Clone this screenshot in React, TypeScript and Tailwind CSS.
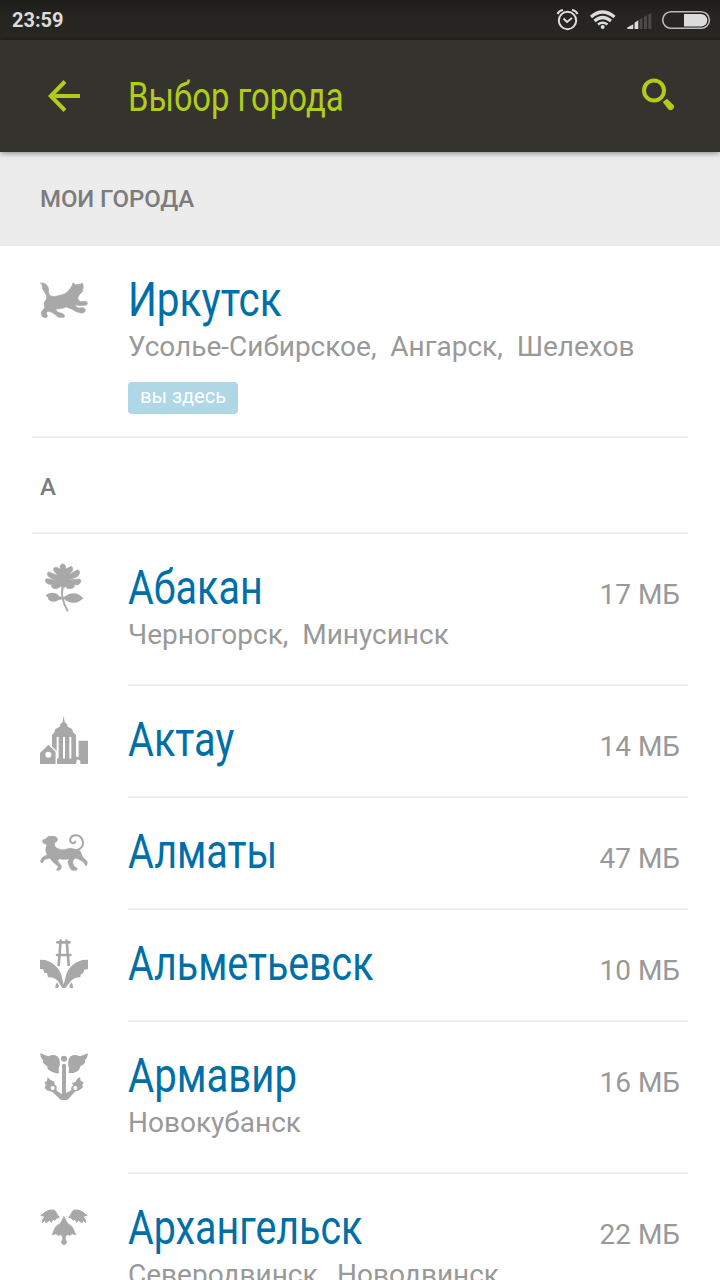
import React from "react";

type City = { name: string; icon: string; stretch: string; near?: string; size?: string };

const GREY = "#a8a8a8";

function CityIcon({ kind }: { kind: string }) {
  const top = kind === "flower" ? 27 : kind === "bird" ? 12 : 18;
  return (
    <svg
      className="mt-[30px] h-12 w-12 shrink-0 overflow-visible"
      viewBox={`30 ${top} 144 144`}
      fill={GREY}
      stroke={GREY}
      strokeWidth="0"
      strokeLinecap="round"
      strokeLinejoin="round"
    >
      {kind === "beast" && (
        <path strokeWidth="2" d="M32 39 C43 37 53 44 55 55 C57 65 54 73 61 77 C72 83 90 76 103 72 C114 66 121 56 126 47 L129 38 L136 44 L150 43 L157 39 L160 49 L157 65 L147 75 L143 85 Q145 93 151 95 L167 94 Q176 98 170 105 L149 107 L138 104 L136 108 L145 114 L160 113 Q170 119 164 126 L155 130 Q149 127 139 125 L123 116 L108 111 Q95 118 80 116 L78 121 L84 127 L99 131 Q107 137 102 142 L86 142 L76 134 L64 126 L54 124 L48 128 L52 136 Q53 143 45 143 L36 139 L34 126 L44 113 L42 99 L50 86 L49 75 Q44 67 40 60 Q34 52 37 46 Z" />
      )}
      {kind === "flower" && (
        <>
          <path strokeWidth="2" d="M91 43 Q87 28 98 27 Q109 28 107 42 L124 34 Q131 39 127 48 L115 60 L141 45 Q151 44 148 56 Q146 66 127 71 L115 75 L150 72 Q157 79 147 88 Q141 92 133 88 Q135 100 121 101 Q112 103 105 94 Q102 103 92 94 Q80 105 72 100 Q62 99 66 88 Q50 90 46 78 Q44 70 52 71 L86 77 Q63 73 54 63 Q49 52 57 51 L85 62 Q70 50 70 41 Q76 31 91 43 Z" />
          <path d="M100 88 Q94 112 97 125 Q101 148 112 166" fill="none" strokeWidth="6" />
          <path d="M47 122 C57 110 78 111 87 122 L97 128 L119 116 Q143 110 160 130 Q141 148 120 142 Q108 139 104 133 L87 134 Q71 146 55 134 Q57 128 47 122 Z" />
        </>
      )}
      {kind === "building" && (
        <>
          <path d="M101 17 L104 35 L111 43 L113 50 L126 57 L130 68 L138 74 L138 139 L146 142 L146 92 L174 92 L174 162 L151 162 L151 152 L141 148 L138 162 L81 162 V127 L66 112 L66 74 L72 69 L76 57 L89 50 L91 43 L98 35 Z" />
          <path d="M30 129 L55 104 L77 126 V162 H30 Z" />
          <path d="M83 83 V143 M102 83 V143 M121 83 V143" fill="none" stroke="#fff" strokeWidth="6" />
          <circle cx="55" cy="134" r="9" fill="#fff" />
          <path d="M63 107 L79 123 V162" fill="none" stroke="#fff" strokeWidth="3" />
        </>
      )}
      {kind === "leopard" && (
        <>
          <path strokeWidth="1" d="M37 54 L46 51 L55 43 L70 42 Q83 44 83 54 L79 60 L74 62 Q73 72 79 77 Q95 86 109 81 L121 78 L137 82 Q151 83 154 94 L157 103 L172 119 Q173 131 167 131 L160 120 L144 111 L134 109 L128 120 L132 132 L142 139 Q143 146 134 146 L123 143 L118 134 L113 120 L117 110 Q102 115 89 110 L83 116 L94 131 Q96 143 84 146 L79 144 L85 134 L69 120 L59 109 L43 113 L38 123 Q31 123 31 117 L38 105 L51 98 Q43 84 50 68 L39 63 Z" />
          <path d="M128 84 C142 86 160 80 159 62 C158 46 147 39 136 40 C120 41 117 56 124 62 Q132 67 136 59" fill="none" strokeWidth="6" />
        </>
      )}
      {kind === "derrick" && (
        <>
          <path d="M82 25 H119 M81 63 H121 M92 20 L86 93 M110 20 L116 93" fill="none" strokeWidth="8" />
          <path d="M30 77 L45 78 C69 84 90 104 95 126 L101 152 L108 124 C114 101 134 84 157 78 L174 77 V105 L163 107 L159 118 Q151 119 151 130 Q136 130 126 137 L106 162 H97 L83 140 Q71 129 54 130 L51 118 L42 116 L40 106 H30 Z" />
          <path d="M81 145 L87 155 L84 162 H76 Q75 153 81 145 Z M124 145 Q130 153 129 162 H120 L118 155 Z" />
        </>
      )}
      {kind === "anchor" && (
        <>
          <circle cx="102" cy="38" r="9" />
          <path d="M96 56 Q102 50 108 56 V141 L124 133 Q121 122 130 119 L126 111 L136 108 L142 98 L150 93 L152 104 L161 109 L157 117 L159 122 Q149 136 137 135 L112 162 H93 L67 138 L49 132 L44 124 L48 117 L43 109 L51 104 L53 94 L62 102 L73 107 L74 116 L80 120 L80 134 L96 145 Z" />
          <path d="M30 22 L55 31 Q78 20 88 39 Q92 54 86 66 L87 81 Q70 84 58 73 Q50 69 53 62 Q35 51 39 43 Q31 36 30 22 Z M174 22 L150 31 Q126 20 116 39 Q112 55 117 67 L116 81 Q136 83 147 72 L151 61 Q168 54 165 42 Q173 36 174 22 Z" />
          <circle cx="68" cy="126" r="6" fill="#fff" />
          <circle cx="136" cy="126" r="6" fill="#fff" />
        </>
      )}
      {kind === "bird" && (
        <>
          <path strokeWidth="2" d="M102 50 L113 70 L127 81 L138 105 Q125 98 119 107 Q110 99 106 113 V119 Q112 123 109 130 L102 135 L95 130 Q92 123 98 119 V113 Q94 99 86 107 Q79 98 66 105 L76 81 L91 70 Z" />
          <path strokeWidth="3" d="M34 46 Q48 33 58 31 Q74 27 78 37 Q81 45 88 52 Q80 52 74 61 L69 57 L64 67 L58 61 L48 68 L46 61 L37 67 Q38 55 45 49 Q40 49 34 46 Z M170 46 Q156 33 146 31 Q130 27 126 37 Q123 45 116 52 Q124 52 130 61 L135 57 L140 67 L146 61 L156 68 L158 61 L167 67 Q166 55 159 49 Q164 49 170 46 Z" />
        </>
      )}
    </svg>
  );
}

const CITIES: City[] = [
  { name: "Абакан", icon: "flower", stretch: "scale-x-[0.806]", near: "Черногорск,  Минусинск", size: "17 МБ" },
  { name: "Актау", icon: "building", stretch: "scale-x-[0.810]", size: "14 МБ" },
  { name: "Алматы", icon: "leopard", stretch: "scale-x-[0.807]", size: "47 МБ" },
  { name: "Альметьевск", icon: "derrick", stretch: "scale-x-[0.803]", size: "10 МБ" },
  { name: "Армавир", icon: "anchor", stretch: "scale-x-[0.819]", near: "Новокубанск", size: "16 МБ" },
  { name: "Архангельск", icon: "bird", stretch: "scale-x-[0.804]", near: "Северодвинск,  Новодвинск", size: "22 МБ" },
];

function CityName({ stretch, children }: { stretch: string; children: string }) {
  return (
    <div
      className={`h-[56px] w-max origin-left whitespace-nowrap text-[49px] leading-[56px] text-[#006fa8] ${stretch}`}
    >
      {children}
    </div>
  );
}

function Nearby({ children }: { children: string }) {
  return <div className="whitespace-pre pt-px text-[28px] leading-9 text-[#999]">{children}</div>;
}

function StatusBar() {
  return (
    <div className="flex h-10 items-center bg-linear-to-b from-[#1d1c19] to-[#262521] to-40% pl-3 pr-[9px]">
      <span className="flex-1 text-[20px] font-bold leading-10 text-[#dcdcdc]">23:59</span>
      <svg className="h-10 w-[164px]" viewBox="0 0 164 40" fill="none" stroke="#dcdcdc">
        <circle cx="20.5" cy="20.5" r="8.7" strokeWidth="2" />
        <path d="M16.500 18.500 L20 22 L25 18" strokeWidth="2" />
        <path d="M10.500 14 Q12 10.500 16 10 M25 10 Q29 10.500 30.500 14" strokeWidth="2" />
        <path d="M44 17 Q55.500 7 67.500 17 M47.500 21 Q55.500 14 64 21" strokeWidth="3.200" />
        <path d="M51 24.500 Q55.500 21 60.500 24.500" strokeWidth="2.600" />
        <circle cx="55.700" cy="27" r="2" fill="#dcdcdc" stroke="none" />
        <path d="M80.300 29 V27.500 L86.300 24.300 V29 Z M87.600 29 V22.800 L91.300 20.300 V29 Z" fill="#dcdcdc" stroke="none" />
        <path d="M92.500 29 V19.500 L95.500 17.700 V29 Z M97 29 V17 L100 15.200 V29 Z M101.300 29 V14.500 L104.300 12.800 V29 Z" fill="#4a4945" stroke="none" />
        <rect x="115.700" y="11.700" width="46.700" height="16.600" rx="8.300" strokeWidth="1.600" stroke="#b9b9b7" />
        <path d="M137 14 H154 A6.200 6.200 0 0 1 154 26.500 H137 Z" fill="#dcdcdc" stroke="none" />
      </svg>
    </div>
  );
}

function CityRow({ city }: { city: City }) {
  return (
    <div className={city.near ? "flex h-[152px] shrink-0 pl-10 pr-8" : "flex h-28 shrink-0 pl-10 pr-8"}>
      <CityIcon kind={city.icon} />
      <div className="ml-10 flex min-w-0 flex-1 justify-between border-b-2 border-[#eee] pr-2 pt-[26px]">
        <div>
          <CityName stretch={city.stretch}>{city.name}</CityName>
          {city.near && <Nearby>{city.near}</Nearby>}
        </div>
        <span className="mt-[17px] text-[28px] leading-9 text-[#999]">{city.size}</span>
      </div>
    </div>
  );
}

export default function App() {
  return (
    <div className="flex h-[1280px] w-[720px] flex-col overflow-hidden bg-white font-['Roboto',sans-serif]">
      <StatusBar />
      <header className="z-10 flex h-28 shrink-0 items-center bg-[#35332d] pl-12 pr-11 text-[#b1cc19] shadow-[0_1px_6px_rgba(0,0,0,0.45)]">
        <svg className="h-8 w-8" viewBox="0 0 32 32" fill="none" stroke="currentColor" strokeWidth="4">
          <path d="M17 1.500 L2.800 16 L17 30.500 M3 16 H32" />
        </svg>
        <h1 className="ml-12 origin-left scale-x-[0.802] whitespace-nowrap pt-px text-[41px] font-normal leading-[56px]">
          Выбор города
        </h1>
        <svg className="mb-1 ml-auto h-8 w-[34px] overflow-visible" viewBox="0 0 34 32">
          <circle cx="12" cy="12.500" r="10" fill="none" stroke="currentColor" strokeWidth="4" />
          <path d="M20.700 24 L25 20.800 L31.500 27 Q33.200 29 30.500 31.500 Q28.500 32.800 26.500 31.500 Z" fill="currentColor" />
        </svg>
      </header>

      <div className="flex h-[94px] shrink-0 items-center bg-[#ececec] pl-10 text-[24px] font-medium tracking-[-0.1px] text-[#7c7c7c]">
        МОИ ГОРОДА
      </div>

      <div className="mx-8 flex h-48 shrink-0 border-b-2 border-[#eee] pl-2">
        <CityIcon kind="beast" />
        <div className="ml-10 pt-[26px]">
          <CityName stretch="scale-x-[0.826]">Иркутск</CityName>
          <Nearby>{"Усолье-Сибирское,  Ангарск,  Шелехов"}</Nearby>
          <div className="mt-[17px] flex h-8 w-[110px] justify-center rounded bg-[#b0d7e5] text-[20px] leading-[29px] text-white">
            вы здесь
          </div>
        </div>
      </div>

      <div className="mx-8 flex h-24 shrink-0 items-center border-b-2 border-[#eee] pl-2 pt-1 text-[24px] font-medium text-[#7c7c7c]">
        А
      </div>

      {CITIES.map((city) => (
        <CityRow key={city.name} city={city} />
      ))}
    </div>
  );
}
